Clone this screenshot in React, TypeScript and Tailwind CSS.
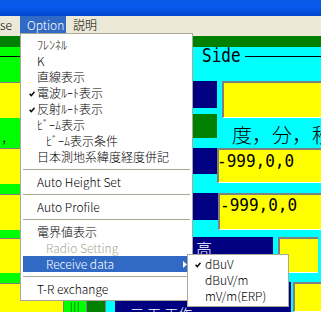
import React from "react";

type MenuEntry =
  | { sep: true }
  | {
      sep?: false;
      label: string;
      checked?: boolean;
      indent?: boolean;
      disabled?: boolean;
      active?: boolean;
      submenu?: boolean;
    };

const optionMenu: MenuEntry[] = [
  { label: "ﾌﾚﾝﾈﾙ" },
  { label: "K" },
  { label: "直線表示" },
  { label: "電波ﾙｰﾄ表示", checked: true },
  { label: "反射ﾙｰﾄ表示", checked: true },
  { label: "ﾋﾞｰﾑ表示" },
  { label: "ﾋﾞｰﾑ表示条件", indent: true },
  { label: "日本測地系緯度経度併記" },
  { sep: true },
  { label: "Auto Height Set" },
  { sep: true },
  { label: "Auto Profile" },
  { sep: true },
  { label: "電界値表示" },
  { label: "Radio Setting", indent: true, disabled: true },
  { label: "Receive data", indent: true, active: true, submenu: true },
  { sep: true },
  { label: "T-R exchange" },
];

const receiveMenu = [
  { label: "dBuV", checked: true },
  { label: "dBuV/m" },
  { label: "mV/m(ERP)" },
];

const ui = "font-['Noto_Sans_CJK_JP',sans-serif] text-[12px] font-light";
const mono = "font-['DejaVu_Sans_Mono',monospace]";

// small menu check mark
const Check = ({ color = "black" }: { color?: string }) => (
  <svg width="6" height="6" viewBox="0 0 6 6" className="absolute left-[6px] top-[6px]">
    <path d="M0.6 2.8 L2.3 4.6 L5.5 0.8" fill="none" stroke={color} strokeWidth="1.4" />
  </svg>
);

// sunken win32 edit box
const Edit = ({ className = "", children }: { className?: string; children?: React.ReactNode }) => (
  <div
    className={`bg-[#FFFF00] border-t-2 border-l-2 border-[#808080] border-b border-b-white overflow-hidden ${className}`}
  >
    {children}
  </div>
);

const EditValue = ({ text, className = "" }: { text: string; className?: string }) => (
  <span className={`inline-block ${mono} text-[16px] leading-[16px] text-black scale-y-[1.12] ${className}`}>
    {text}
  </span>
);

const LeftEdit = ({ className = "" }: { className?: string }) => (
  <div className={`bg-[#FFFF00] border-t border-[#808080] ${className}`} />
);

export default function App() {
  return (
    <div className={`relative w-[321px] h-[312px] overflow-hidden bg-[#ECE9D8] ${ui}`}>
      {/* Title bar */}
      <div className="h-[16px] bg-gradient-to-b from-[#0A5CE6] via-[#0659EC] to-[#0246CF]" />

      {/* Menu bar */}
      <div className="h-[17px] flex items-center bg-[#ECE9D8] leading-[16px] text-black">
        <span className="w-[20px]">se</span>
        <span className="h-[18px] w-[46px] mt-[1px] flex items-center bg-[#316AC5] text-white pl-[7px]">Option</span>
        <span className="ml-[7px]">説明</span>
      </div>

      {/* Form behind the menu */}
      <div className="pt-[3px]">
        <div className="h-[11px] bg-[#008000]" />
        <div className="h-[265px] flex">
          {/* left column */}
          <div className="w-[20px] flex flex-col bg-[#00FF00]">
            <div className="h-[35px] pt-[9px]">
              <div className="h-px bg-black" />
            </div>
            <LeftEdit className="h-[36px]" />
            <div className="h-[30px] pl-[2px] pt-[9px] text-[16px] leading-[16px] text-black">,</div>
            <LeftEdit className="h-[36px]" />
            <div className="h-[10px]" />
            <LeftEdit className="h-[36px]" />
            <div className="h-[8px]" />
            <LeftEdit className="h-[35px]" />
            <div className="h-[10px]" />
            <LeftEdit className="flex-1" />
          </div>

          {/* middle column, mostly under the menu */}
          <div className="flex-1 flex flex-col justify-end bg-[#00FFFF]">
            <div className="h-[30px] flex">
              <LeftEdit className="w-[43px]" />
              <div className="w-px bg-[#808080]" />
              <div className="w-[22px] bg-[#00FF00] pl-[6px] pt-[19px] text-[10px] leading-[10px] text-black tracking-[1px]">|||</div>
              <div className="w-px bg-[#808080]" />
              <div className="w-[18px] bg-[#008000]" />
              <div className="w-px bg-[#808080]" />
              <div className="w-[9px] bg-[#00FFFF]" />
              <div className="flex-1 bg-[#000080] pl-[15px] pt-[23px] text-[14px] leading-[16px] text-white whitespace-nowrap">
                三 工 工作
              </div>
            </div>
          </div>

          {/* right column */}
          <div className="w-[128px] flex flex-col bg-[#00FFFF]">
            <div className="h-[34px]">
              <div className="h-[18px] flex items-center">
                <span className={`pl-[9px] ${mono} text-[16px] leading-[16px] text-black inline-block scale-y-[1.25]`}>Side</span>
                <div className="flex-1 ml-[4px] h-px bg-black" />
              </div>
            </div>

            <div className="h-[149px] flex">
              <div className="w-[24px] flex flex-col">
                <div className="h-[27px] bg-[#000080]" />
                <div className="h-[24px] mt-[6px] bg-[#008000]" />
                <div className="h-[26px] mt-[10px] bg-[#000080]" />
                <div className="h-[27px] mt-[19px] w-[25px] bg-[#000080]" />
              </div>
              <div className="flex-1 flex flex-col">
                <Edit className="h-[37px] ml-[5px]" />
                <div className="h-[30px] pl-[15px] pt-[7px] text-[20px] leading-[20px] text-black whitespace-nowrap">
                  度，分，秒
                </div>
                <Edit className="h-[35px] pt-[2px]">
                  <EditValue text="-999,0,0" className="-ml-[2px]" />
                </Edit>
                <Edit className="h-[37px] mt-[10px] ml-[1px] pt-[1px]">
                  <EditValue text="-999,0,0" />
                </Edit>
              </div>
            </div>

            <div className="h-[36px] mt-[7px] flex">
              <div className="w-[80px] h-[20px] bg-[#000080] pl-[3px] pt-[3px] text-[16px] leading-[16px] text-white">高</div>
              <Edit className="w-[40px] ml-[5px] h-full" />
            </div>

            <div className="flex-1 mt-[9px] flex">
              <div className="w-[98px] bg-[#000080]" />
              <Edit className="flex-1 ml-[2px]" />
            </div>
          </div>
        </div>
      </div>

      {/* Option dropdown */}
      <div className="absolute left-[20px] top-[33px] w-[173px] bg-white border border-[#ACA899] px-[2px] py-[3px] leading-[16px]">
        {optionMenu.map((m, i) =>
          m.sep ? (
            <div key={i} className="h-[9px] pt-[4px]">
              <div className="h-px bg-[#ACA899]" />
            </div>
          ) : (
            <div
              key={i}
              className={`relative h-[16px] flex items-center whitespace-nowrap ${
                m.indent ? "pl-[23px]" : "pl-[14px]"
              } ${m.active ? "bg-[#316AC5] text-white" : m.disabled ? "text-[#ACA899]" : "text-black"}`}
            >
              {m.checked && <Check />}
              <span className="pb-[1px]">{m.label}</span>
              {m.submenu && (
                <svg width="4" height="7" viewBox="0 0 4 7" className="ml-auto mr-[3px]">
                  <polygon points="0,0 4,3.5 0,7" fill="white" />
                </svg>
              )}
            </div>
          )
        )}
      </div>

      {/* Receive data submenu */}
      <div className="absolute left-[187px] top-[254px] w-[102px] bg-white border border-[#ACA899] pt-[1px] pb-[2px] px-[1px] leading-[16px] text-black">
        {receiveMenu.map((m) => (
          <div key={m.label} className="relative h-[16px] flex items-center pl-[16px] whitespace-nowrap">
            {m.checked && <Check />}
            <span className="pb-[1px]">{m.label}</span>
          </div>
        ))}
      </div>
    </div>
  );
}
